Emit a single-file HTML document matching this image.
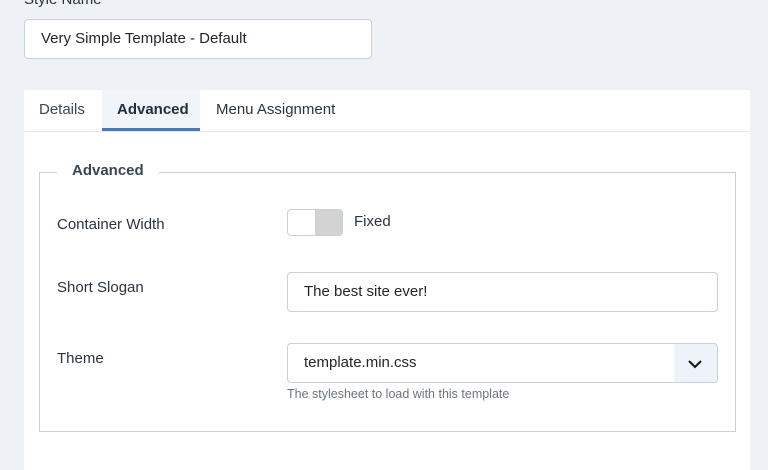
<!DOCTYPE html><html><head><style>
body{margin:0;width:768px;height:461px;overflow:hidden;background:#eef1f6;font-family:"Liberation Sans",sans-serif;color:#22262a;position:relative}
.a{position:absolute}
.inp{position:absolute;background:#fff;border:1px solid #c8d0dc;border-radius:4px;box-sizing:border-box;font-size:15px;line-height:38px;padding-left:16px;color:#22262a}
.lbl{position:absolute;left:57px;font-size:15px;color:#2a3440}
</style></head><body>
<div class="a" style="left:24px;top:-9px;font-size:15px;color:#2a3440">Style Name *</div>
<div class="inp" style="left:24px;top:19px;width:348px;height:40px">Very Simple Template - Default</div>
<div class="a" style="left:24px;top:90px;width:726px;height:380px;background:#fff"></div>
<div class="a" style="left:24px;top:131px;width:726px;height:1px;background:#e3e7ee"></div>
<div class="a" style="left:102px;top:90px;width:98px;height:41px;background:#f1f4f9;border-bottom:3px solid #4a78b8;box-sizing:border-box"></div>
<div class="a" style="left:39px;top:101px;font-size:15px;color:#3a4652">Details</div>
<div class="a" style="left:117px;top:101px;font-size:15px;font-weight:bold;color:#1f2d3d">Advanced</div>
<div class="a" style="left:216px;top:101px;font-size:15px;color:#2a3440">Menu Assignment</div>
<div class="a" style="left:39px;top:172px;width:697px;height:260px;border:1px solid #c8d0dc;box-sizing:border-box"></div>
<div class="a" style="left:57px;top:162px;padding:0 15px;background:#fff;font-size:15px;font-weight:bold;color:#3a4652">Advanced</div>
<div class="lbl" style="top:216px">Container Width</div>
<div class="a" style="left:287px;top:209px;width:56px;height:27px;border:1px solid #c8d0dc;border-radius:4px;box-sizing:border-box;overflow:hidden;background:#fff"><div style="position:absolute;left:27px;top:0;width:29px;height:27px;background:#d3d3d3"></div></div>
<div class="a" style="left:354px;top:213px;font-size:15px;color:#2a3440">Fixed</div>
<div class="lbl" style="top:279px">Short Slogan</div>
<div class="inp" style="left:287px;top:272px;width:431px;height:40px">The best site ever!</div>
<div class="lbl" style="top:350px">Theme</div>
<div class="inp" style="left:287px;top:343px;width:431px;height:40px;overflow:hidden">template.min.css
<div style="position:absolute;right:0;top:0;width:43px;height:40px;background:#eef2f9"><svg width="43" height="38" viewBox="0 0 43 38"><path d="M15 17l6 6 6-6" fill="none" stroke="#111" stroke-width="2"/></svg></div></div>
<div class="a" style="left:287px;top:387px;font-size:12.5px;color:#6b7580">The stylesheet to load with this template</div>
</body></html>
